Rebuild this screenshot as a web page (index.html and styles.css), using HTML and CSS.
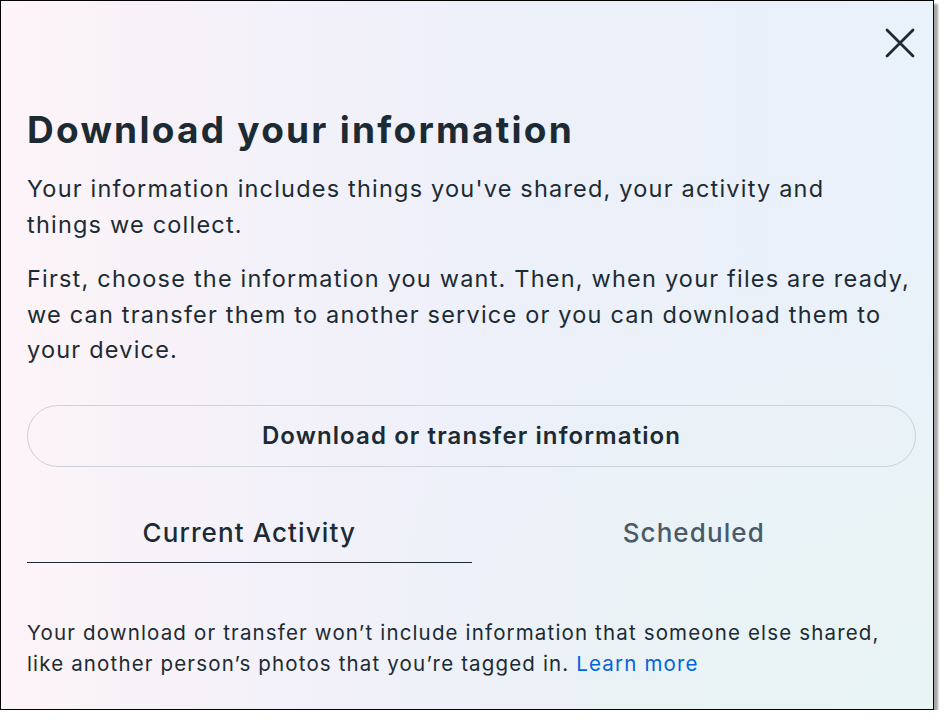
FILE: index.html
```html
<!DOCTYPE html>
<html lang="en">
<head>
<meta charset="utf-8">
<title>Download your information</title>
<link rel="stylesheet" href="styles.css">
</head>
<body>
<div class="dialog">
  <div class="header">
    <button class="close" aria-label="Close">
      <svg width="30" height="30" viewBox="0 0 30 30"><path d="M2 2 L28 28 M28 2 L2 28" stroke="#1c2b33" stroke-width="2.8" stroke-linecap="round" fill="none"/></svg>
    </button>
  </div>
  <h1 class="title">Download your information</h1>
  <p class="text">Your information includes things you've shared, your activity and<br>things we collect.</p>
  <p class="text">First, choose the information you want. Then, when your files are ready, we can transfer them to another service or you can download them to your device.</p>
  <button class="pill">Download or transfer information</button>
  <div class="tabs">
    <div class="tab active">Current Activity</div>
    <div class="tab">Scheduled</div>
  </div>
  <p class="note">Your download or transfer won’t include information that someone else shared, like another person’s photos that you’re tagged in. <a href="#" class="link">Learn more</a></p>
</div>
</body>
</html>
```
FILE: styles.css
```css
html, body {
  margin: 0;
  padding: 0;
  background: #ffffff;
}
body {
  font-family: Inter, "Noto Sans", sans-serif;
  color: #1c2b33;
}
.dialog {
  width: 934px;
  height: 710px;
  box-sizing: border-box;
  border: 1px solid #000;
  box-shadow: 4px 4px 2px rgba(0, 0, 0, 0.35);
  background:
    radial-gradient(ellipse at 100% 100%, rgba(233, 245, 243, 0.9) 0%, rgba(233, 245, 243, 0) 45%),
    linear-gradient(90deg, #fdf4f8 0%, #f3f1f9 30%, #ecf0f9 60%, #e9f1fa 100%);
  padding: 0 19px 0 26px;
  display: flex;
  flex-direction: column;
}
.header {
  display: flex;
  justify-content: flex-end;
  padding-top: 27px;
  height: 31px;
}
.close {
  border: 0;
  background: none;
  padding: 0;
  margin-right: -1px;
  width: 30px;
  height: 30px;
  cursor: pointer;
}
.title {
  margin: 49px 0 0 0;
  font-size: 37px;
  font-weight: 700;
  line-height: 44px;
  letter-spacing: 2.25px;
}
.text {
  margin: 19px 0 0 0;
  font-size: 23.5px;
  line-height: 35.5px;
  letter-spacing: 1.2px;
}
.text + .text {
  margin-top: 19px;
}
.pill {
  margin-top: 37px;
  flex-shrink: 0;
  height: 62px;
  width: 889px;
  border: 1px solid #cbd2d9;
  border-radius: 31px;
  background: transparent;
  font-family: inherit;
  font-size: 24px;
  font-weight: 600;
  letter-spacing: 1.1px;
  color: #1c2b33;
}
.tabs {
  display: flex;
  margin-top: 51px;
  width: 889px;
}
.tab {
  flex: 1;
  text-align: center;
  font-size: 26px;
  font-weight: 500;
  line-height: 30px;
  letter-spacing: 1.1px;
  padding-bottom: 14px;
  color: #4a5b67;
}
.tab.active {
  color: #1c2b33;
  border-bottom: 1.5px solid #1c2b33;
}
.note {
  margin: 54px 0 0 0;
  font-size: 20.5px;
  line-height: 31px;
  letter-spacing: 1.15px;
}
.link {
  color: #0064e0;
  text-decoration: none;
}
```
